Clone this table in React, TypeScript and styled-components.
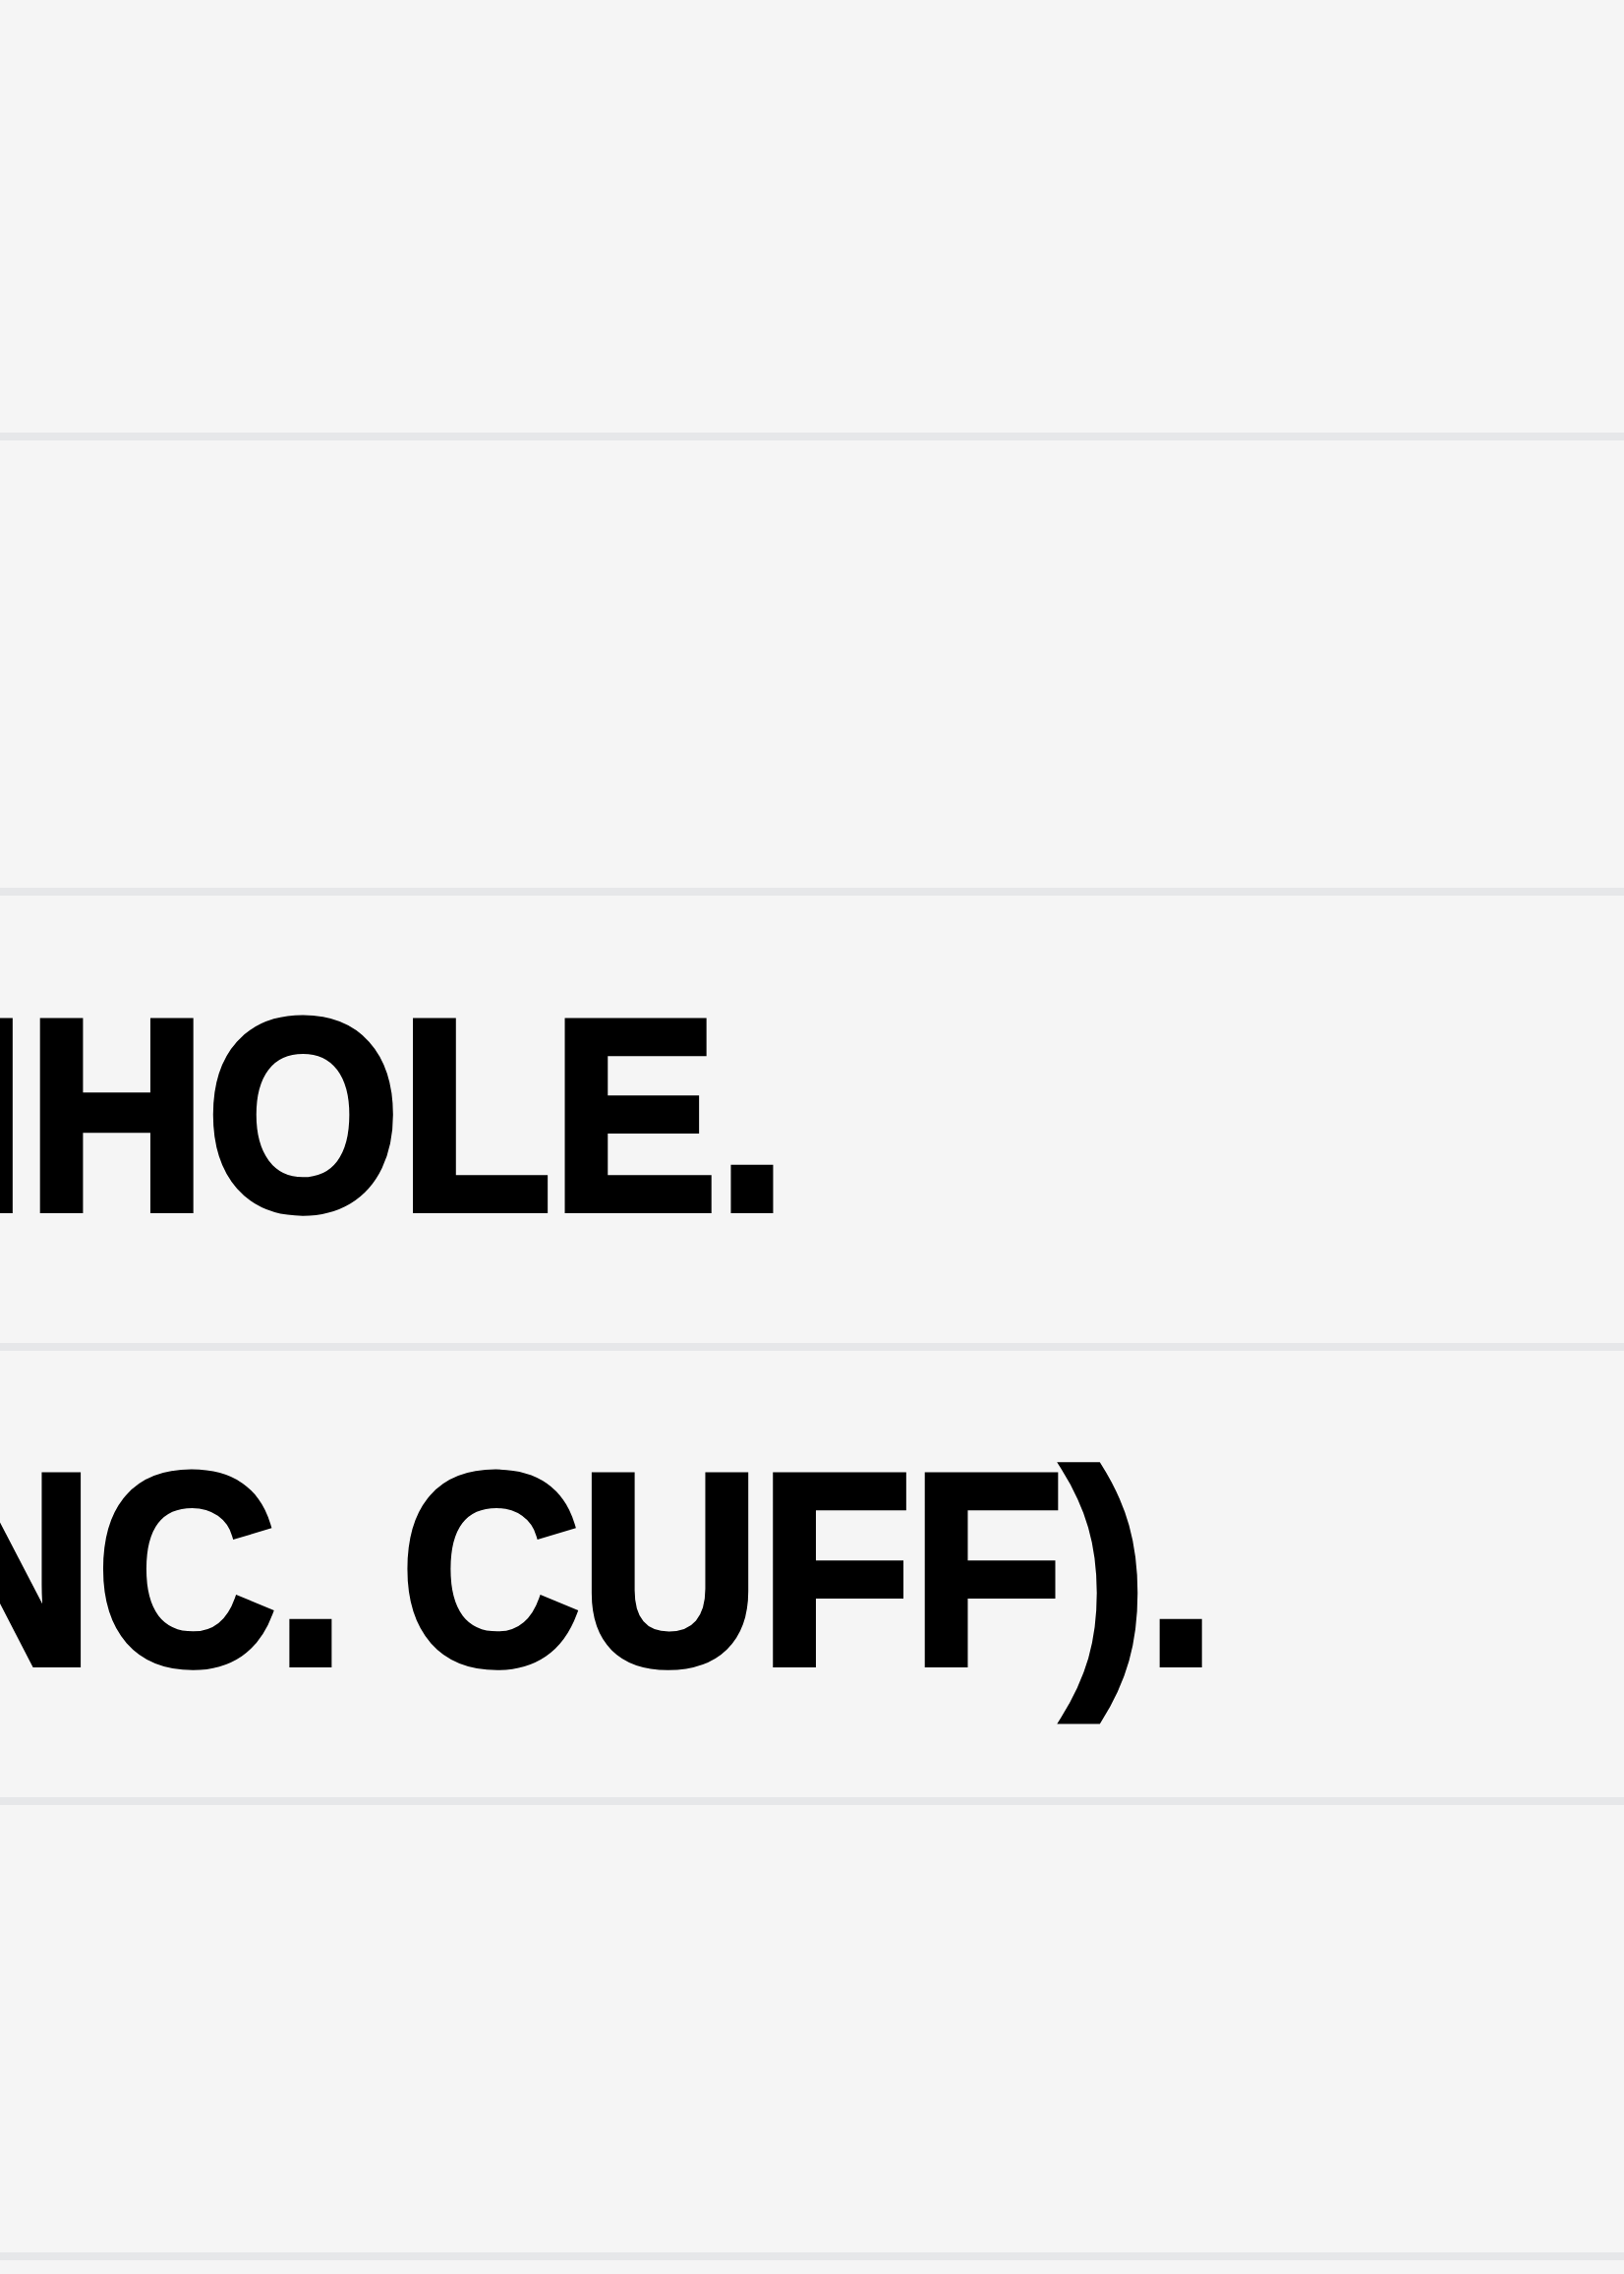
import React from 'react';
import styled, { createGlobalStyle } from 'styled-components';

type Entry = {
  id: string;
  lead?: string;
  text?: string;
  leadWidth?: number;
  overlap?: number;
};

const GlobalStyle = createGlobalStyle`
  html, body {
    margin: 0;
    padding: 0;
    background: #f5f5f5;
  }
  body {
    overflow: hidden;
  }
`;

// the shot is a narrow crop of a long label list, so the first letters are cut
const entries: Entry[] = [
  { id: 'top' },
  { id: 'blank' },
  { id: 'hole', lead: 'BUTTON', text: 'HOLE.', leadWidth: 28.75, overlap: -1.3 },
  { id: 'cuff', lead: '(IN', text: 'C. CUFF).', leadWidth: 104.6, overlap: -3 },
  { id: 'end' },
];

const App: React.FC = () => (
  <Page>
    <GlobalStyle />
    <List>
      {entries.map((entry, index) => (
        <Row key={entry.id} $height={index === 0 ? 448 : 462.75}>
          {entry.text && (
            <Label>
              <Lead $width={entry.leadWidth ?? 0} $overlap={entry.overlap ?? 0}>
                {entry.lead}
              </Lead>
              <span>{entry.text}</span>
            </Label>
          )}
        </Row>
      ))}
    </List>
  </Page>
);

export default App;

const Page = styled.div`
  width: 1652px;
  height: 2313px;
  background: #f5f5f5;
  overflow: hidden;
`;

const List = styled.ul`
  list-style: none;
  margin: 0;
  padding: 0;
`;

const Row = styled.li<{ $height: number }>`
  box-sizing: border-box;
  height: ${({ $height }) => $height}px;
  border-bottom: 8px solid #e6e7e9;
  display: flex;
  align-items: center;
  overflow: hidden;
`;

const Label = styled.div`
  display: flex;
  white-space: pre;
  font-family: 'Liberation Sans', Arial, Helvetica, sans-serif;
  font-size: 277px;
  font-weight: 700;
  line-height: normal;
  word-spacing: -15px;
  color: #000;
  -webkit-text-stroke: 8px #000;
  transform-origin: left center;
  transform: translateY(-4px) scaleX(0.913);
`;

const Lead = styled.span<{ $width: number; $overlap: number }>`
  flex-shrink: 0;
  display: flex;
  justify-content: flex-end;
  overflow: hidden;
  width: ${({ $width }) => $width}px;
  margin-right: ${({ $overlap }) => -$overlap}px;
`;
